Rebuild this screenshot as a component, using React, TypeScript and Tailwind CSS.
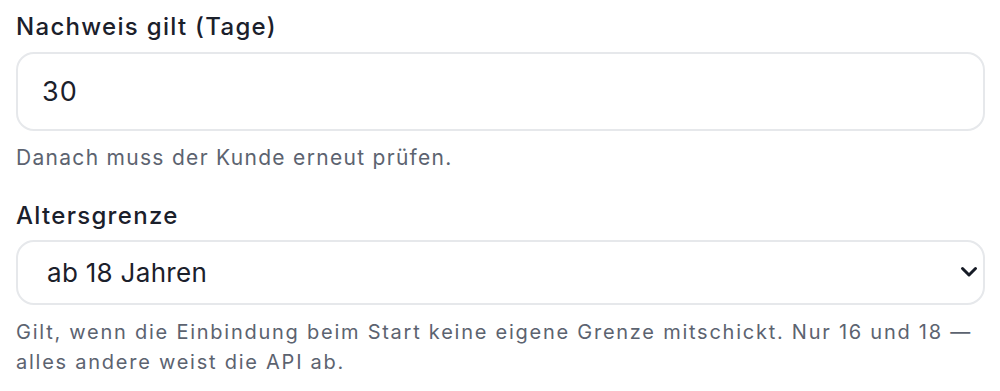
const ChevronDown = () => (
  <svg width="18" height="12" viewBox="0 0 18 12" fill="none">
    <path d="M2.5 2.5 9 9l6.5-6.5" stroke="#161b26" strokeWidth="3" strokeLinecap="round" strokeLinejoin="round" />
  </svg>
);

export default function App() {
  return (
    <div className="bg-white px-4 pt-[11px] font-['Inter',sans-serif] text-[#1b202b]">
      {/* Gültigkeit */}
      <label className="block text-[24px] leading-[32px] font-medium tracking-[1.3px]">Nachweis gilt (Tage)</label>
      <input
        type="number"
        defaultValue={30}
        className="mt-[9px] block h-[79px] w-[969px] rounded-[18px] border-2 border-[#e6e8eb] bg-white px-[24px] text-[27px] tracking-[1px] text-[#1b202b] outline-none [appearance:textfield]"
      />
      <p className="mt-[13px] text-[21px] leading-[28px] tracking-[1.3px] text-[#5c6370]">Danach muss der Kunde erneut prüfen.</p>

      {/* Altersgrenze */}
      <label className="mt-[28px] block text-[24px] leading-[32px] font-medium tracking-[1.3px]">Altersgrenze</label>
      <div className="relative mt-[8px] w-[969px]">
        <select
          defaultValue="18"
          className="block h-[65px] w-full appearance-none rounded-[18px] border-2 border-[#e6e8eb] bg-white pl-[29px] text-[26px] tracking-[0.3px] text-[#1b202b] outline-none"
        >
          <option value="16">ab 16 Jahren</option>
          <option value="18">ab 18 Jahren</option>
        </select>
        <span className="pointer-events-none absolute right-[7px] top-[26px]">
          <ChevronDown />
        </span>
      </div>
      <p className="mt-[12px] w-[968px] text-[20px] leading-[30px] tracking-[1.75px] text-[#5c6370]">
        Gilt, wenn die Einbindung beim Start keine eigene Grenze mitschickt. Nur 16 und 18 — alles andere weist die API ab.
      </p>
    </div>
  );
}
